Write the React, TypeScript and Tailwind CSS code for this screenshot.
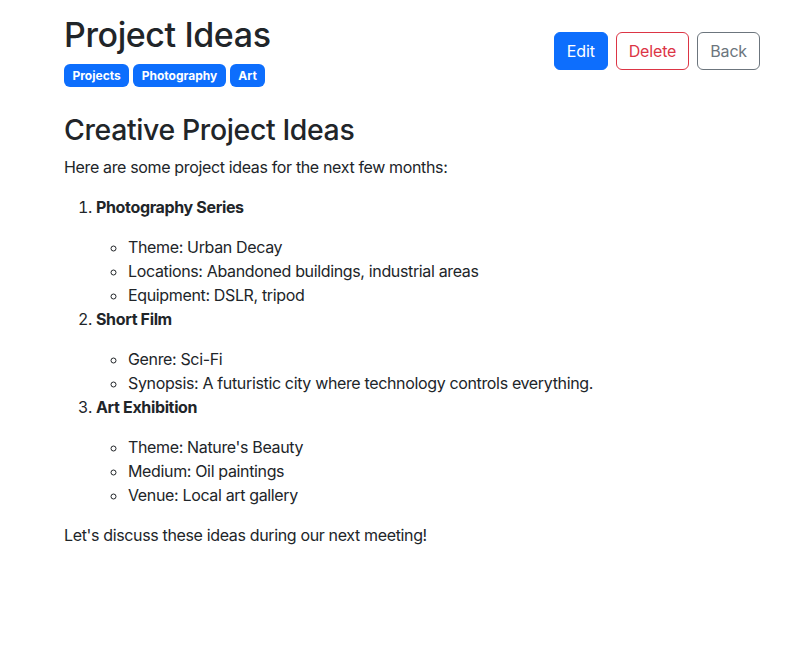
import React from "react";

export default function App() {
  return (
    <div className="min-h-[652px] bg-white text-[#212529] text-[16px] leading-[1.5] font-['Inter',sans-serif] tracking-[-0.022em]">
      <div className="pl-[64px] pr-[42px] pt-[15px]">
        <div className="flex items-center justify-between mb-[25px]">
          <div>
            <h1 className="text-[34px] leading-[1.2] font-medium mb-[8px] tracking-[-0.012em]">Project Ideas</h1>
            <div className="flex gap-[4px] h-[24px] items-center tracking-normal">
              {["Projects", "Photography", "Art"].map((b) => (
                <span
                  key={b}
                  className="bg-[#0d6efd] text-white text-[12px] font-bold leading-none px-[8.5px] py-[5.5px] rounded-[6px]"
                >
                  {b}
                </span>
              ))}
            </div>
          </div>
          <div className="flex gap-[8px] tracking-[-0.01em]">
            <button className="h-[38px] px-[12px] text-[16px] rounded-[6px] border border-[#0d6efd] bg-[#0d6efd] text-white">
              Edit
            </button>
            <button className="h-[38px] px-[12px] text-[16px] rounded-[6px] border border-[#dc3545] text-[#dc3545] bg-white">
              Delete
            </button>
            <button className="h-[38px] px-[12px] text-[16px] rounded-[6px] border border-[#6c757d] text-[#6c757d] bg-white">
              Back
            </button>
          </div>
        </div>
        <h2 className="text-[28.4px] leading-[1.2] font-medium mb-[8px]">Creative Project Ideas</h2>
        <p className="mb-[16px]">Here are some project ideas for the next few months:</p>
        <ol className="list-decimal pl-[32px] mb-[16px]">
          <li>
            <p className="mb-[16px]">
              <strong className="font-bold">Photography Series</strong>
            </p>
            <ul className="list-[circle] pl-[32px]">
              <li>Theme: Urban Decay</li>
              <li>Locations: Abandoned buildings, industrial areas</li>
              <li>Equipment: DSLR, tripod</li>
            </ul>
          </li>
          <li>
            <p className="mb-[16px]">
              <strong className="font-bold">Short Film</strong>
            </p>
            <ul className="list-[circle] pl-[32px]">
              <li>Genre: Sci-Fi</li>
              <li>Synopsis: A futuristic city where technology controls everything.</li>
            </ul>
          </li>
          <li>
            <p className="mb-[16px]">
              <strong className="font-bold">Art Exhibition</strong>
            </p>
            <ul className="list-[circle] pl-[32px]">
              <li>Theme: Nature's Beauty</li>
              <li>Medium: Oil paintings</li>
              <li>Venue: Local art gallery</li>
            </ul>
          </li>
        </ol>
        <p>Let's discuss these ideas during our next meeting!</p>
      </div>
    </div>
  );
}
